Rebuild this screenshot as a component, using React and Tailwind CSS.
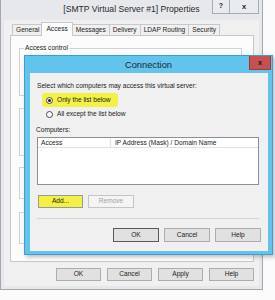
function Btn({ children, className = "" }) {
  return (
    <div className={"flex items-center justify-center border text-[6.6px] leading-none " + className}>
      {children}
    </div>
  );
}

function Radio({ checked }) {
  return (
    <span className="relative inline-flex items-center justify-center w-[7px] h-[7px] rounded-full border border-[#4a4a4a] bg-white shrink-0">
      {checked && <span className="w-[3px] h-[3px] rounded-full bg-[#1a1a1a]" />}
    </span>
  );
}

export default function App() {
  const tabs = ["General", "Access", "Messages", "Delivery", "LDAP Routing", "Security"];
  return (
    <div className="relative w-[275px] h-[300px] bg-[#fbfbfb] overflow-hidden font-['Liberation_Sans',Arial,sans-serif] text-[#222]">
      {/* Properties window */}
      <div className="flex flex-col w-[263px] h-[290px] bg-[#e6e8eb] border-l border-r border-b border-[#a3a8ae]">
        {/* title bar */}
        <div className="grid grid-cols-[1fr_auto_1fr] h-[20px] shrink-0">
          <div />
          <div className="pt-[4px] text-[8.6px] leading-[11px] text-[#2a2a2a] whitespace-nowrap">
            [SMTP Virtual Server #1] Properties
          </div>
          <div className="flex justify-end pr-[3px]">
            <div className="flex items-center justify-center w-[18px] h-[14px] border border-t-0 border-[#a7acb2] bg-[#e9ecef] text-[7px] font-bold">
              ?
            </div>
            <div className="flex items-center justify-center w-[29px] h-[14px] border border-t-0 border-l-0 border-[#a7acb2] bg-[#e9ecef] text-[7.5px] font-bold">
              x
            </div>
          </div>
        </div>

        {/* client area */}
        <div className="flex flex-col mx-[3px] bg-[#f0f0f0] h-[266px]">
          {/* tab control */}
          <div className="ml-[6px] mt-[2px] w-[244px]">
            <div className="flex items-end h-[13px] pl-[2px]">
              {tabs.map((t) =>
                t === "Access" ? (
                  <div
                    key={t}
                    className="relative z-10 -mx-[1px] -mb-[1px] h-[14px] px-[4px] flex items-start pt-[2px] bg-[#fcfcfc] border border-b-0 border-[#c8c8c8] text-[6.6px] leading-[8px]"
                  >
                    {t}
                  </div>
                ) : (
                  <div
                    key={t}
                    className="h-[11px] px-[3px] flex items-center bg-[#f0f0f0] border border-b-0 border-r-0 last:border-r border-[#c8c8c8] text-[6.6px] leading-[8px]"
                  >
                    {t}
                  </div>
                )
              )}
            </div>
            <div className="h-[227px] bg-[#fcfcfc] border border-[#c8c8c8] flex flex-col pl-[8px]">
              <fieldset className="mt-[8px] w-[223px] h-[52px] border border-[#cfd3d7] pl-[4px]">
                <legend className="px-[1px] text-[6.6px] leading-[8px]">Access control</legend>
              </fieldset>
              <div className="mt-[12px] w-[223px] h-[48px] border border-[#cfd3d7]" />
              <div className="mt-[11px] w-[223px] h-[32px] border border-[#cfd3d7]" />
              <div className="mt-[13px] w-[223px] h-[32px] border border-[#cfd3d7]" />
            </div>
          </div>
          {/* bottom buttons */}
          <div className="flex justify-end gap-[6px] mt-[6px] pr-[5px]">
            <Btn className="w-[45px] h-[13px] bg-[#e1e1e1] border-[#adadad]">OK</Btn>
            <Btn className="w-[45px] h-[13px] bg-[#e1e1e1] border-[#adadad]">Cancel</Btn>
            <Btn className="w-[45px] h-[13px] bg-[#e1e1e1] border-[#adadad]">Apply</Btn>
            <Btn className="w-[45px] h-[13px] bg-[#e1e1e1] border-[#adadad]">Help</Btn>
          </div>
        </div>
      </div>

      {/* Connection dialog */}
      <div className="absolute left-[24px] top-[55px] w-[249px] h-[200px] flex flex-col bg-[#62c3ec] border border-[#3d9fd0] shadow-[2px_2px_4px_rgba(0,0,0,0.25)]">
        <div className="grid grid-cols-[1fr_auto_1fr] h-[17px] shrink-0">
          <div />
          <div className="pt-[3px] text-[9.3px] leading-[12px] text-[#1c2a33] whitespace-nowrap">Connection</div>
          <div className="flex justify-end pr-[1px]">
            <div className="flex items-center justify-center w-[22px] h-[14px] bg-[#c75050] border border-t-0 border-[#9c3b3b] text-[7.5px] font-bold text-[#1a1a1a]">
              x
            </div>
          </div>
        </div>
        <div className="flex flex-col flex-1 ml-[5px] mr-[4px] mb-[3px] bg-[#f0f0f0] text-[6.6px] leading-[8px]">
          <div className="mt-[9px] ml-[7px] whitespace-nowrap">
            Select which computers may access this virtual server:
          </div>
          <div className="mt-[3px] ml-[12px] w-[76px] h-[14px] flex items-center gap-[4px] pl-[4px] bg-[#f3f146] rounded-[3px]">
            <Radio checked />
            <span className="whitespace-nowrap">Only the list below</span>
          </div>
          <div className="mt-[3px] ml-[16px] flex items-center gap-[4px]">
            <Radio />
            <span className="whitespace-nowrap">All except the list below</span>
          </div>
          <div className="mt-[8px] ml-[6px]">Computers:</div>
          <div className="mt-[3px] ml-[7px] w-[222px] h-[48px] bg-white border border-[#8c9096] flex flex-col">
            <div className="flex h-[10px] border-b border-[#e2e2e2] bg-white">
              <div className="w-[73px] pl-[3px] border-r border-[#e2e2e2] flex items-center">Access</div>
              <div className="flex-1 pl-[4px] flex items-center whitespace-nowrap">IP Address (Mask) / Domain Name</div>
            </div>
          </div>
          <div className="mt-[10px] ml-[8px] flex gap-[5px]">
            <Btn className="w-[45px] h-[13px] bg-[#f3f146] border-[#9a9a9a]">Add...</Btn>
            <Btn className="w-[46px] h-[13px] bg-[#f4f4f4] border-[#c4c4c4] text-[#a3a3a3]">Remove</Btn>
          </div>
          <div className="mt-[10px] ml-[7px] w-[222px] h-px bg-[#d5d5d5]" />
          <div className="mt-[9px] mr-[7px] flex justify-end gap-[5px]">
            <Btn className="w-[46px] h-[14px] bg-[#e1e1e1] border-[#5a5a5a]">OK</Btn>
            <Btn className="w-[46px] h-[14px] bg-[#e1e1e1] border-[#adadad]">Cancel</Btn>
            <Btn className="w-[46px] h-[14px] bg-[#e1e1e1] border-[#adadad]">Help</Btn>
          </div>
        </div>
      </div>
    </div>
  );
}
